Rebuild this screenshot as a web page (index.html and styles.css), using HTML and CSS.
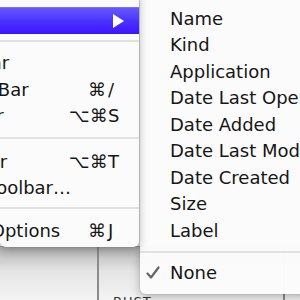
FILE: index.html
```html
<!DOCTYPE html>
<html lang="en">

<head>
    <meta charset="UTF-8">
    <title>View Menu</title>
    <link rel="stylesheet" href="styles.css">
</head>

<body>
    <div class="window">
        <div class="content"></div>
        <div class="columns">
            <div class="col col-name"></div>
            <div class="col col-kind"><span class="col-label">BUST</span></div>
            <div class="col col-rest"></div>
        </div>
    </div>

    <div class="menu main-menu">
        <div class="item active">
            <span class="label">Arrange By</span>
            <span class="arrow"></span>
        </div>
        <div class="sep"></div>
        <div class="item">
            <span class="label">Show Tab Bar</span>
        </div>
        <div class="item">
            <span class="label">Hide Status Bar</span>
            <span class="keys"><span class="mods">⌘</span><span class="key">/</span></span>
        </div>
        <div class="item">
            <span class="label">Hide Sidebar</span>
            <span class="keys"><span class="mods">⌥⌘</span><span class="key">S</span></span>
        </div>
        <div class="sep wide"></div>
        <div class="item">
            <span class="label">Show Toolbar</span>
            <span class="keys"><span class="mods">⌥⌘</span><span class="key">T</span></span>
        </div>
        <div class="item">
            <span class="label">Customize Toolbar…</span>
        </div>
        <div class="sep"></div>
        <div class="item">
            <span class="label">Show View Options</span>
            <span class="keys"><span class="mods">⌘</span><span class="key">J</span></span>
        </div>
    </div>

    <div class="menu sub-menu">
        <div class="item"><span class="check"></span>Name</div>
        <div class="item"><span class="check"></span>Kind</div>
        <div class="item"><span class="check"></span>Application</div>
        <div class="item"><span class="check"></span>Date Last Opened</div>
        <div class="item"><span class="check"></span>Date Added</div>
        <div class="item"><span class="check"></span>Date Last Modified</div>
        <div class="item"><span class="check"></span>Date Created</div>
        <div class="item"><span class="check"></span>Size</div>
        <div class="item"><span class="check"></span>Label</div>
        <div class="sep"></div>
        <div class="item">
            <span class="check">
                <svg width="14" height="14" viewBox="0 0 14 14">
                    <path d="M1.5 7.5 L5 11.5 L12.5 1.5" fill="none" stroke="#666" stroke-width="2.2" stroke-linecap="round" stroke-linejoin="round"/>
                </svg>
            </span>None
        </div>
    </div>
</body>

</html>
```

FILE: styles.css
```css
body {
    margin: 0;
    width: 300px;
    height: 300px;
    overflow: hidden;
    position: relative;
    font-family: 'DejaVu Sans', 'Liberation Sans', sans-serif;
    background: #f6f6f6;
}

.window {
    height: 300px;
    display: flex;
    flex-direction: column;
}

.content {
    flex: 1;
    background: #fbfbfb;
}

.columns {
    height: 53px;
    display: flex;
    border-top: 1px solid #9a9a9a;
    background: linear-gradient(#b4b4b4, #e4e4e4 45%, #f4f4f4);
}

.col {
    position: relative;
}

.col-name {
    width: 97px;
    border-right: 2px solid #8c8c8c;
}

.col-kind {
    width: 184px;
    border-right: 2px solid #8c8c8c;
}

.col-rest {
    flex: 1;
}

.col-label {
    position: absolute;
    left: 14px;
    bottom: -9px;
    font-size: 13px;
    color: #333;
    letter-spacing: 1px;
}

.menu {
    position: absolute;
    background: rgba(251, 251, 251, 0.98);
    box-shadow: 0 3px 10px rgba(0, 0, 0, 0.28), 0 0 1px rgba(0, 0, 0, 0.35);
    font-size: 18px;
    color: #161616;
    overflow: hidden;
}

.main-menu {
    left: 0;
    top: -6px;
    width: 139px;
    height: 253px;
    padding-top: 13px;
    box-sizing: border-box;
    border-radius: 0 0 6px 6px;
    z-index: 1;
}

.main-menu .item {
    height: 26.5px;
    display: flex;
    align-items: center;
    position: relative;
}

.main-menu .label {
    margin-left: -112px;
    white-space: nowrap;
}

.item.active {
    background: linear-gradient(#6658ff, #4a33ff 50%, #3c14ff);
    border-top: 1px solid #7a6dff;
    box-sizing: border-box;
}

.arrow {
    position: absolute;
    left: 113px;
    top: 6px;
    width: 0;
    height: 0;
    border-top: 7px solid transparent;
    border-bottom: 7px solid transparent;
    border-left: 11px solid #fff;
}

.keys {
    position: absolute;
    left: 69px;
    top: 0;
    height: 100%;
    display: flex;
    align-items: center;
}

.mods {
    width: 37px;
    text-align: right;
}

.key {
    margin-left: 2px;
}

.sep {
    height: 2px;
    margin: 6px 0 8px;
    background: #e2e2e2;
}

.sep.wide {
    margin: 8px 0 9px;
}

.sub-menu {
    left: 140px;
    top: -3px;
    width: 200px;
    padding: 8px 0 8px;
    border-radius: 0 0 6px 6px;
}

.sub-menu .item {
    height: 26.5px;
    display: flex;
    align-items: center;
    white-space: nowrap;
}

.check {
    width: 30px;
    flex-shrink: 0;
    display: flex;
    justify-content: flex-end;
}

.check svg {
    margin-right: 10px;
}

.sub-menu .sep {
    margin: 7px 0 7px;
}
```
